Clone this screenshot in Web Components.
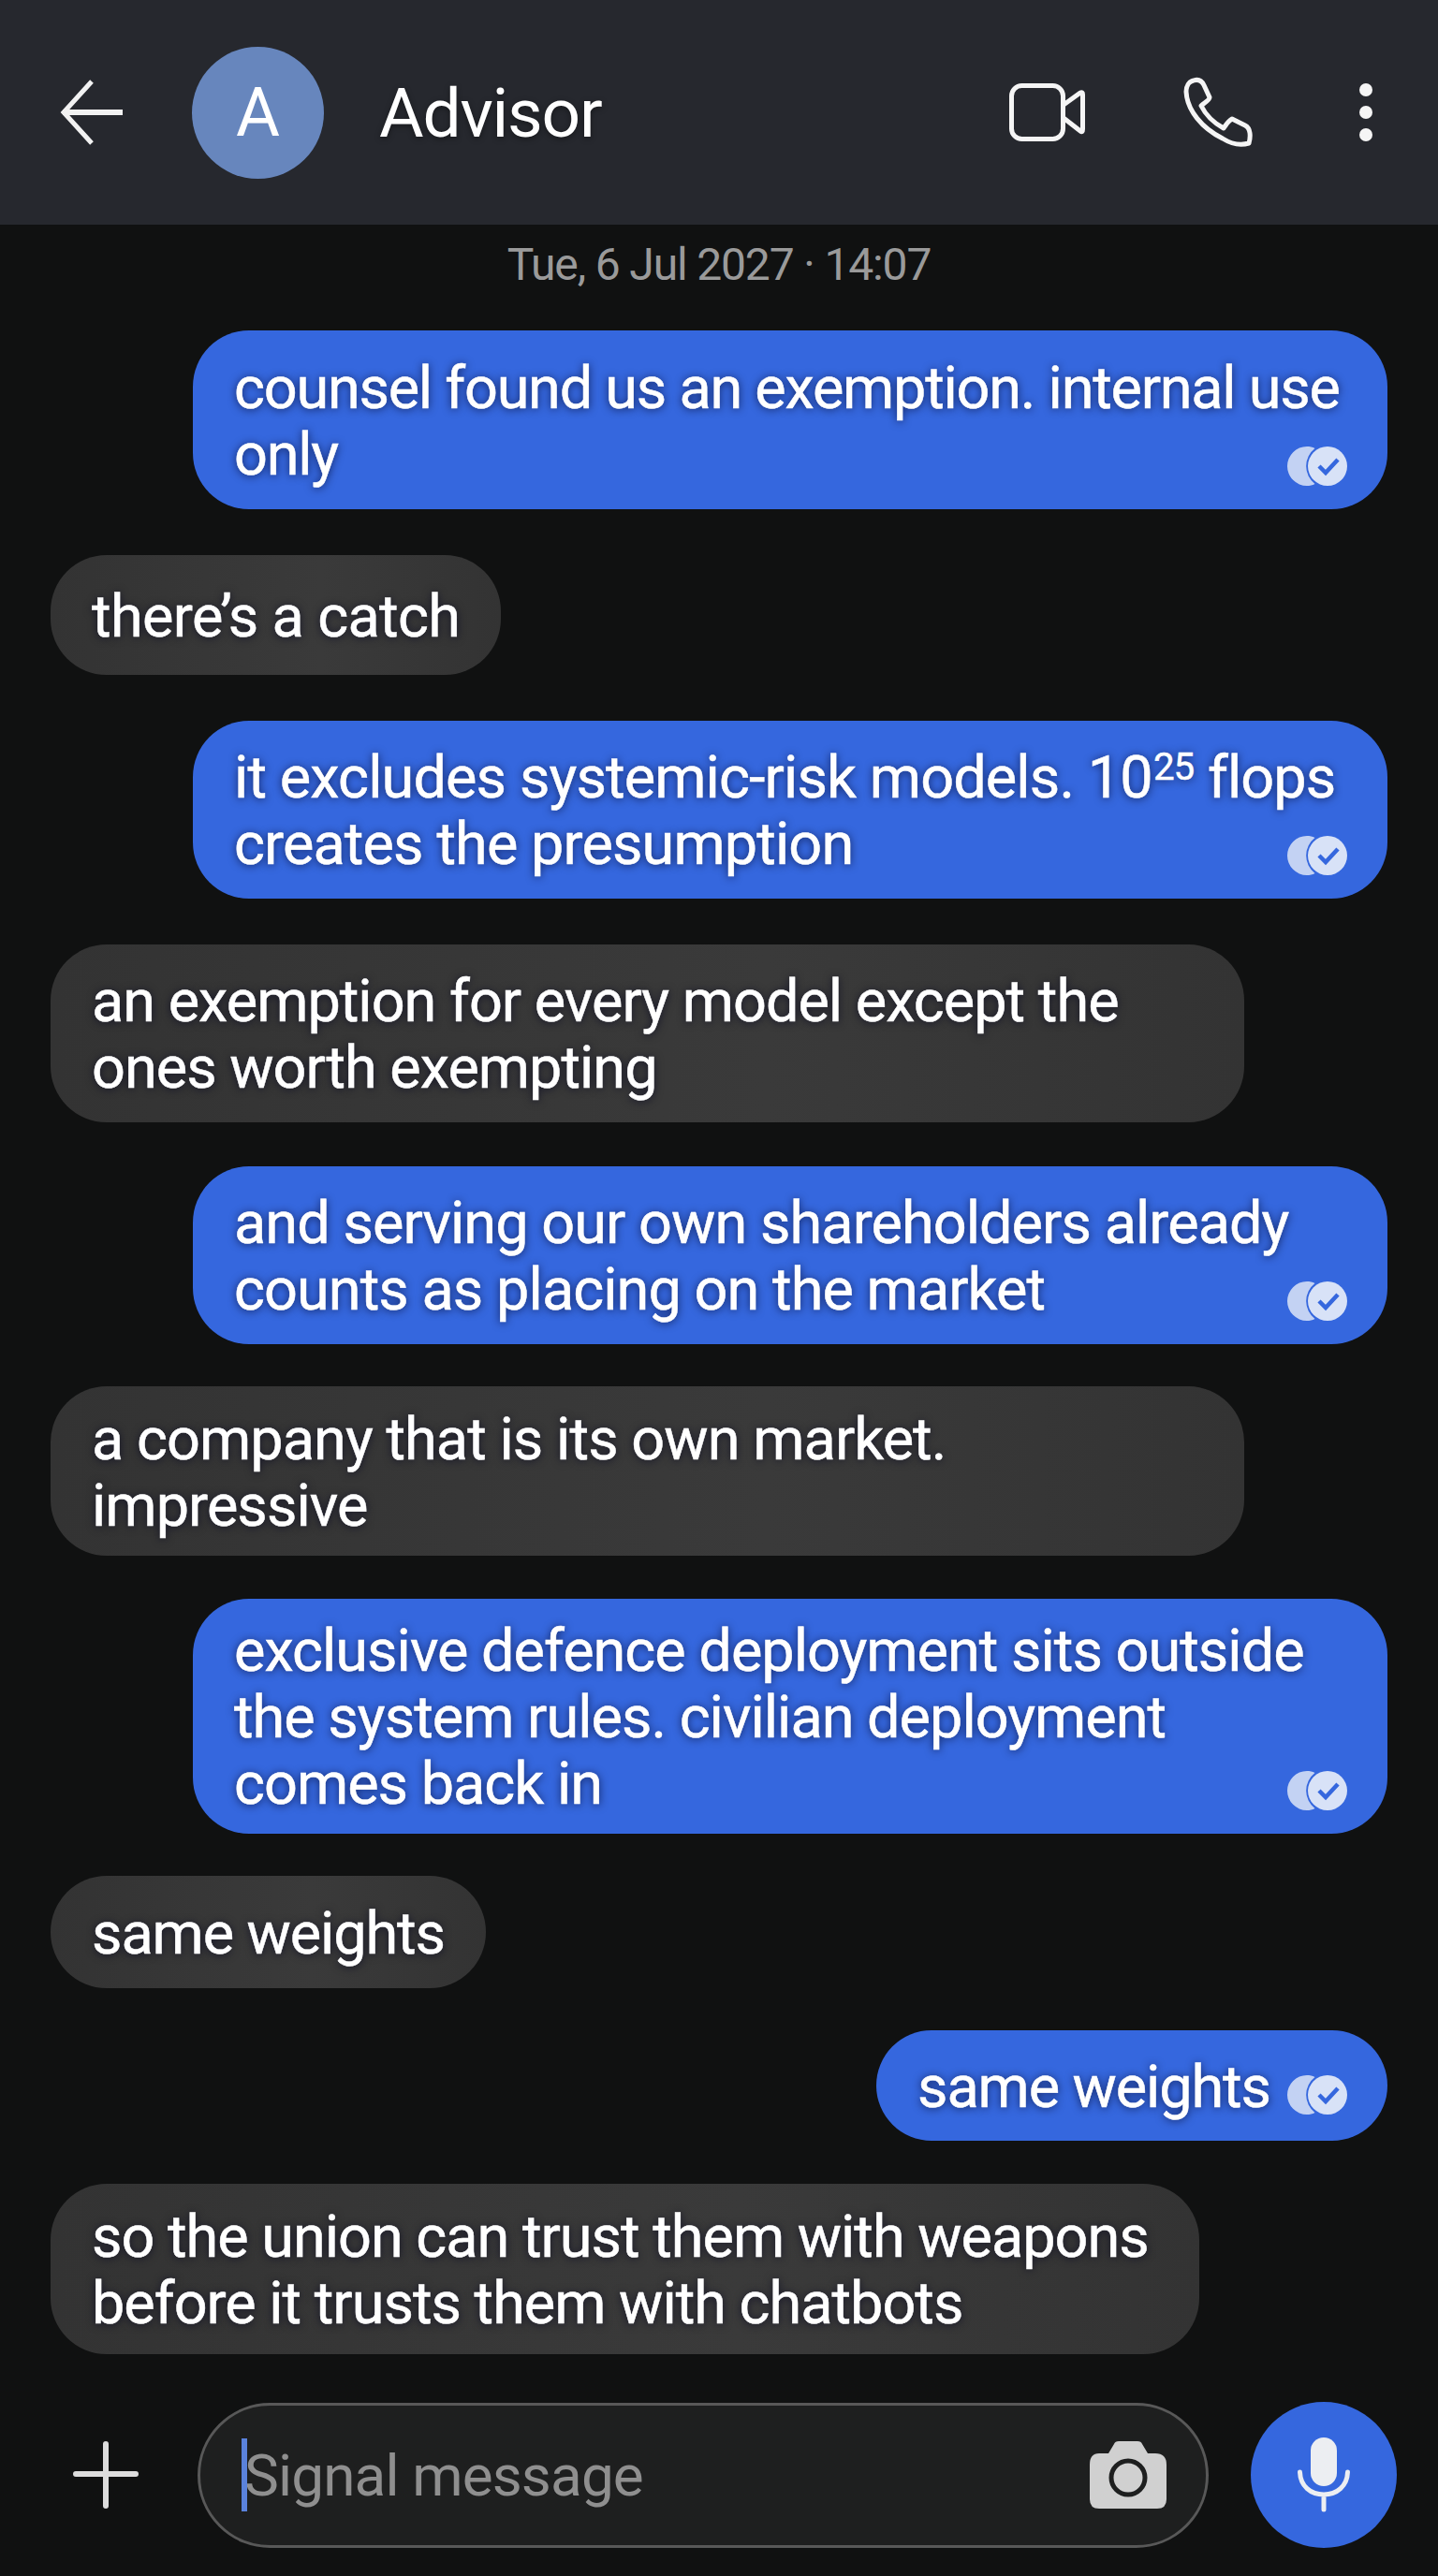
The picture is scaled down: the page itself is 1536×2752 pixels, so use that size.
<!DOCTYPE html>
<html lang="en"><head><meta charset="utf-8"><title>Advisor</title>
<style>
html,body{margin:0;padding:0;background:#101111;}
body{width:1536px;height:2752px;overflow:hidden;font-family:Roboto,"Liberation Sans",sans-serif;color:#fff;}
</style></head><body>
<sg-app>
  <sg-header name="Advisor" initial="A"></sg-header>
  <sg-thread>
    <sg-date>Tue, 6 Jul 2027 · 14:07</sg-date>
    <sg-bubble side="out" w="1276" h="191" top="0" ls="-1.25">counsel found us an exemption. internal use<br>only</sg-bubble>
    <sg-bubble side="in" w="481" h="128" top="49" ls="-.65">there’s a catch</sg-bubble>
    <sg-bubble side="out" w="1276" h="190" top="49" ls="-.9">it excludes systemic-risk models. 10<sg-sup>25</sg-sup> flops<br>creates the presumption</sg-bubble>
    <sg-bubble side="in" w="1275" h="190" top="49" ls="-1">an exemption for every model except the<br>ones worth exempting</sg-bubble>
    <sg-bubble side="out" w="1276" h="190" top="47" ls="-.95">and serving our own shareholders already<br>counts as placing on the market</sg-bubble>
    <sg-bubble side="in" w="1275" h="181" top="45" ls="-.95">a company that is its own market.<br>impressive</sg-bubble>
    <sg-bubble side="out" w="1276" h="251" top="46" ls="-1">exclusive defence deployment sits outside<br>the system rules. civilian deployment<br>comes back in</sg-bubble>
    <sg-bubble side="in" w="465" h="120" top="45">same weights</sg-bubble>
    <sg-bubble side="out" w="546" h="118" top="45" icon-bottom="28">same weights</sg-bubble>
    <sg-bubble side="in" w="1227" h="182" top="46" ls="-1.02">so the union can trust them with weapons<br>before it trusts them with chatbots</sg-bubble>
  </sg-thread>
  <sg-composer placeholder="Signal message"></sg-composer>
</sg-app>
<script>
function def(name, css, html, init){
  customElements.define(name, class extends HTMLElement{
    constructor(){super();const r=this.attachShadow({mode:'open'});r.innerHTML='<style>'+css+'</style>'+(typeof html==='function'?html(this):html);}
    connectedCallback(){ if(init) init(this); }
  });
}
def('sg-app',':host{display:flex;flex-direction:column;width:1536px;height:2752px;background:#101111;}','<slot></slot>');
def('sg-sup',':host{display:inline;font-size:.64em;vertical-align:.46em;line-height:0;letter-spacing:-1px;margin-left:1px;}','<slot></slot>');
def('sg-header',`
:host{display:flex;align-items:center;height:240px;flex:none;background:#26282e;box-sizing:border-box;padding-left:62px;padding-right:69px;}
.back{width:72px;height:70px;flex:none;margin-right:71px;}
.av{width:141px;height:141px;border-radius:50%;background:#6786bd;flex:none;display:flex;align-items:center;justify-content:center;font-size:72px;margin-right:59px;}
.name{font-size:73px;letter-spacing:-1.2px;flex:1;color:#fff;text-shadow:0 2px 6px rgba(0,0,0,.4);position:relative;top:1px;}
.video{width:81px;height:62px;margin-right:105px;flex:none;}
.phone{width:74px;height:74px;margin-right:113px;flex:none;}
.dots{width:16px;height:64px;flex:none;}
svg{display:block;overflow:visible;}
`,'<svg class="back" viewBox="0 0 72 70" fill="none" stroke="#f2f2f2" stroke-width="6"><path d="M36 2 L6 35 L36 68" stroke-width="5"/><path d="M5 35 H69"/></svg><div class="av">A</div><div class="name">Advisor</div>'+
'<svg class="video" viewBox="0 0 81 62" fill="none" stroke="#f5f5f5" stroke-width="5" stroke-linejoin="round"><rect x="2.5" y="2.5" width="55" height="57" rx="11"/><path d="M58 23 L76 10 Q78.500 9 78.500 12 V49 Q78.500 53 76 51 L58 37"/></svg>'+
'<svg class="phone" viewBox="0 0 74 74" fill="none" stroke="#f5f5f5" stroke-width="5" stroke-linejoin="round"><path d="M11 3 C17 1 20 4 22 8 L28 21 C28 24 22 27 19 30 C24 40 32 48 43 54 C46 50 48 46 52 44 L66 51 C72 54 72 63 70 70 C60 73 50 70 42 65 C20 54 4 35 3 15 C3 9 6 4 11 3 Z"/></svg>'+
'<svg class="dots" viewBox="0 0 16 64" fill="#f5f5f5"><circle cx="8" cy="8" r="7"/><circle cx="8" cy="32" r="7"/><circle cx="8" cy="56" r="7"/></svg>');
def('sg-thread',':host{display:flex;flex-direction:column;flex:1;min-height:0;padding:0 54px;}','<slot></slot>');
def('sg-date',':host{display:block;text-align:center;font-size:48px;letter-spacing:-1.15px;line-height:56px;color:#9a9a9a;margin:15px 0 42px;}','<slot></slot>');
def('sg-delivered',':host{display:block;width:64px;height:42px;}svg{display:block;}',
 '<svg width="64" height="42" viewBox="0 0 64 42"><path d="M21 0 A21 21 0 1 0 21 42 C24 42 27 41.400 29.500 40 A24 24 0 0 1 29.500 2 C27 .6 24 0 21 0 Z" fill="#c3d2f3"/><circle cx="43" cy="21" r="21" fill="#d8e2f7"/><path d="M34 21 L41 28 L54 14" fill="none" stroke="#3567de" stroke-width="4.500"/></svg>');
def('sg-bubble',`
:host{display:flex;align-items:center;box-sizing:border-box;position:relative;flex:none;padding:0 44px;border-radius:60px;font-size:63px;font-weight:400;letter-spacing:var(--ls,-1.12px);line-height:71px;color:#fff;white-space:nowrap;text-shadow:0 1px 10px rgba(0,0,30,.7);-webkit-text-stroke:.5px #fff;}
:host([side=out]){align-self:flex-end;background:#3567de;}
:host([side=in]){align-self:flex-start;background:linear-gradient(90deg,#333333,#3a3a3a 60%,#333);}
div{position:relative;top:1px;}
sg-delivered{position:absolute;right:43px;}
`,(el)=>'<div><slot></slot></div>'+(el.getAttribute('side')==='out'?'<sg-delivered style="bottom:'+(el.getAttribute('icon-bottom')||25)+'px"></sg-delivered>':''),
 (el)=>{el.style.width=el.getAttribute('w')+'px';el.style.height=el.getAttribute('h')+'px';el.style.marginTop=el.getAttribute('top')+'px';if(el.hasAttribute('ls'))el.style.setProperty('--ls',el.getAttribute('ls')+'px');});
def('sg-composer',`
:host{display:flex;align-items:center;flex:none;box-sizing:border-box;height:186px;padding:0 44px 30px 78px;margin-top:auto;}
.plus{width:70px;height:72px;flex:none;margin-right:63px;}
.input{flex:1;height:155px;box-sizing:border-box;border:3px solid #585858;border-radius:78px;background:#1e1f1f;display:flex;align-items:center;padding:0 42px 0 44px;position:relative;}
.caret{width:6px;height:78px;background:#5a82dc;flex:none;margin-right:-3px;position:relative;z-index:1;}
.ph{font-size:62px;letter-spacing:-.85px;color:#8f8f8f;flex:1;}
.cam{width:82px;height:72px;flex:none;}
.mic{width:156px;height:156px;border-radius:50%;background:#3567de;flex:none;margin-left:45px;display:flex;align-items:center;justify-content:center;}
svg{display:block;}
`,(el)=>'<svg class="plus" viewBox="0 0 70 72" fill="none" stroke="#dcdcdc" stroke-width="6" stroke-linecap="round"><path d="M35 3 V69 M3 35 H67"/></svg><div class="input"><span class="caret"></span><span class="ph">'+el.getAttribute('placeholder')+'</span><svg class="cam" viewBox="0 0 82 72"><path d="M10 13 H20 L26 3 Q27 0 31 0 H51 Q55 0 56 3 L62 13 H70 Q82 13 82 25 V62 Q82 72 72 72 H10 Q0 72 0 62 V25 Q0 13 10 13 Z" fill="#d0d0d0"/><circle cx="41" cy="39" r="18" fill="#d0d0d0" stroke="#1e1f1f" stroke-width="5"/></svg></div>'+
'<div class="mic"><svg width="56" height="80" viewBox="0 0 56 80"><rect x="14" y="0" width="28" height="52" rx="14" fill="#eceef2"/><path d="M2.500 37 C3 52 14 61 28 61 C42 61 53 52 53.500 37 M28 61 V77" fill="none" stroke="#eceef2" stroke-width="5" stroke-linecap="round"/></svg></div>');
</script>
</body></html>
